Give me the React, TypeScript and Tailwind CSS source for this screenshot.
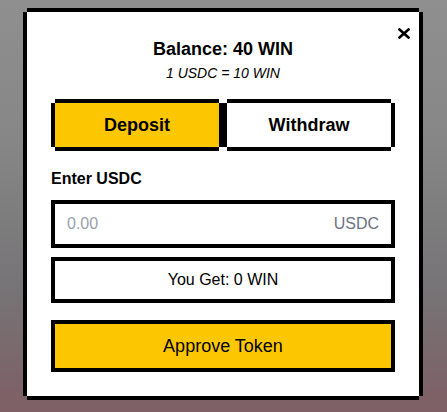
import { useState } from "react";

const pixelBorder =
  "shadow-[0_-4px_0_0_#000,0_4px_0_0_#000,-4px_0_0_0_#000,4px_0_0_0_#000]";

const CloseIcon = () => (
  <svg width="12" height="11" viewBox="0 0 12 11" fill="none">
    <path d="M1.5 1.5L10.5 9.5M10.5 1.5L1.5 9.5" stroke="#000" strokeWidth="2.6" strokeLinecap="square" />
  </svg>
);

const App = () => {
  const [tab, setTab] = useState<"deposit" | "withdraw">("deposit");
  const [amount, setAmount] = useState("");

  const win = amount ? Math.floor(Number(amount) * 10) || 0 : 0;

  return (
    <div className="min-h-screen w-full pl-[27px] pt-3 font-['Liberation_Sans',Arial,sans-serif] text-black bg-[linear-gradient(180deg,#8f8f8f_0%,#868686_35%,#767476_70%,#7e5f65_100%)]">
      <div className={`relative w-[392px] h-[384px] bg-white px-6 pt-[23px] pb-6 ${pixelBorder}`}>
        <button className="absolute top-[16px] right-[9px] p-0" aria-label="Close">
          <CloseIcon />
        </button>

        <h2 className="text-center text-lg leading-7 font-bold">Balance: 40 WIN</h2>
        <p className="text-center text-sm leading-5 italic">1 USDC = 10 WIN</p>

        <div className="mt-4 grid grid-cols-2">
          <div className="p-1">
            <button
              onClick={() => setTab("deposit")}
              className={`w-full h-11 text-lg font-bold ${pixelBorder} ${
                tab === "deposit" ? "bg-yellow-400" : "bg-white"
              }`}
            >
              Deposit
            </button>
          </div>
          <div className="p-1">
            <button
              onClick={() => setTab("withdraw")}
              className={`w-full h-11 text-lg font-bold ${pixelBorder} ${
                tab === "withdraw" ? "bg-yellow-400" : "bg-white"
              }`}
            >
              Withdraw
            </button>
          </div>
        </div>

        <label className="mt-4 block text-base leading-6 font-bold">Enter USDC</label>

        <div className="mt-[9px] flex h-12 items-center border-4 border-black px-3">
          <input
            value={amount}
            onChange={(e) => setAmount(e.target.value)}
            placeholder="0.00"
            className="min-w-0 flex-1 bg-transparent text-base outline-none placeholder:text-gray-400"
          />
          <span className="text-base text-gray-500">USDC</span>
        </div>

        <div className="mt-[9px] flex h-[46px] items-center justify-center border-4 border-black text-base">
          You Get: {win} WIN
        </div>

        <button className="mt-[17px] w-full h-[52px] border-4 border-black bg-yellow-400 text-lg">
          Approve Token
        </button>
      </div>
    </div>
  );
};

export default App;
